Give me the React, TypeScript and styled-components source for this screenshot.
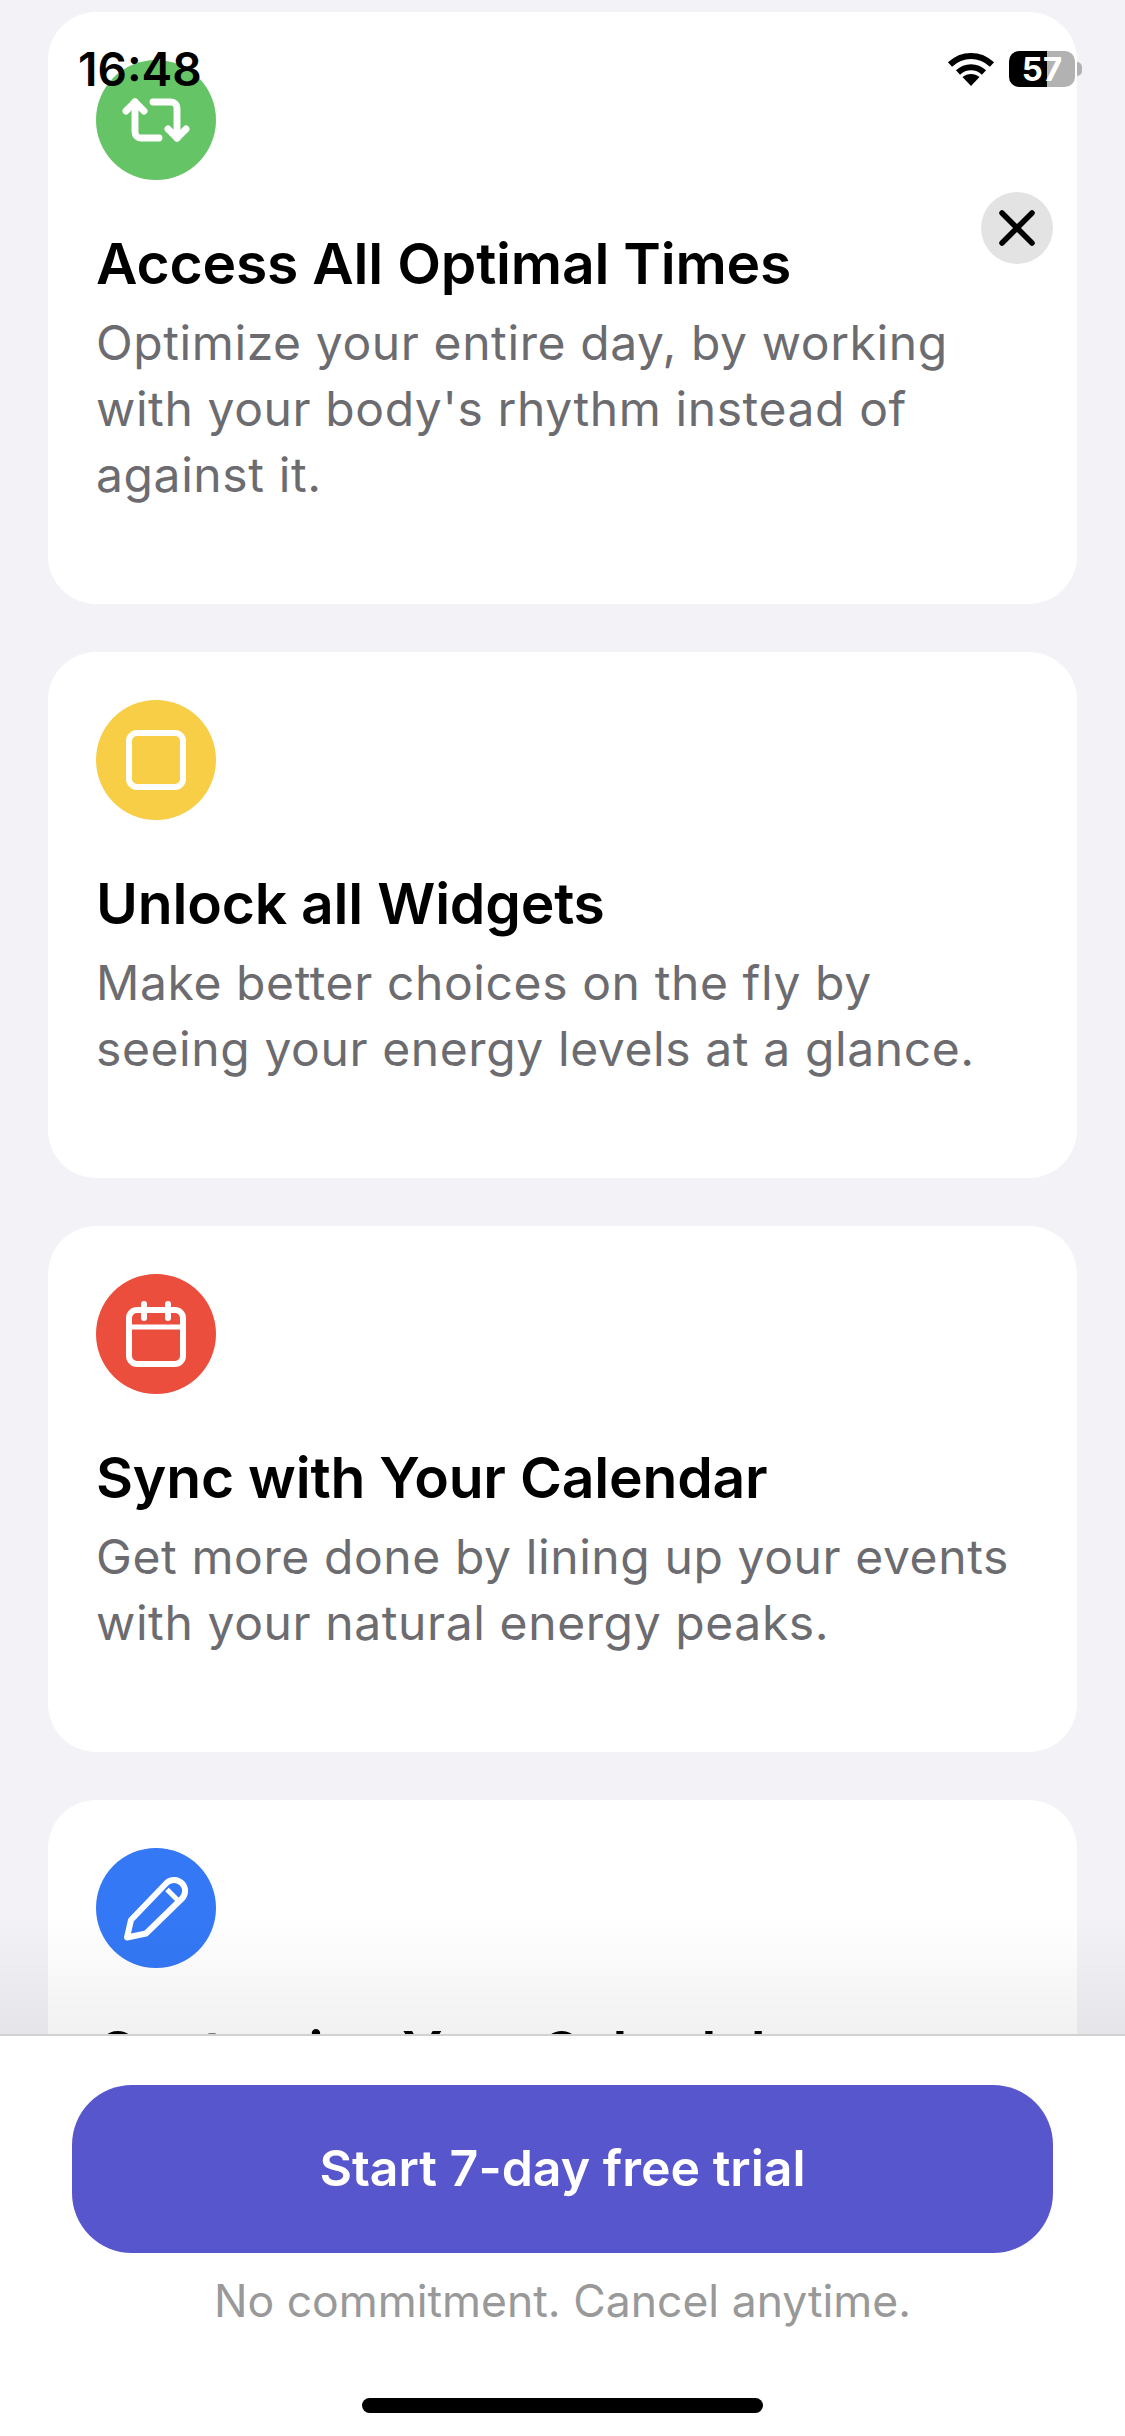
import styled, { createGlobalStyle } from "styled-components";
import { Repeat2 } from "lucide-react";

const GlobalStyle = createGlobalStyle`
  html, body {
    margin: 0;
    padding: 0;
    background: #f2f2f7;
  }
`;

const Screen = styled.div`
  position: relative;
  display: flex;
  flex-direction: column;
  width: 1125px;
  height: 2436px;
  overflow: hidden;
  background: #f2f2f7;
  font-family: Inter, "Liberation Sans", sans-serif;
`;

const StatusBar = styled.div`
  position: absolute;
  top: 0;
  left: 0;
  right: 0;
  z-index: 3;
  display: flex;
  justify-content: space-between;
  align-items: center;
  height: 138px;
  padding: 0 50px 0 78px;
  box-sizing: border-box;
`;

const Clock = styled.span`
  font-size: 46px;
  font-weight: 600;
  line-height: 1;
  color: #000;
`;

const StatusIcons = styled.div`
  display: flex;
  align-items: center;
  gap: 14px;
`;

const Battery = styled.div`
  position: relative;
  width: 66px;
  height: 36px;
  border-radius: 10px;
  background: linear-gradient(to right, #000 0 57%, #b2b2b2 57% 100%);
  display: flex;
  align-items: center;
  justify-content: center;
  font-size: 33px;
  font-weight: 700;
  color: #fff;

  &::after {
    content: "";
    position: absolute;
    right: -7px;
    top: 11px;
    width: 5px;
    height: 14px;
    border-radius: 0 5px 5px 0;
    background: #b2b2b2;
  }
`;

const CloseButton = styled.button`
  position: absolute;
  top: 192px;
  left: 981px;
  z-index: 2;
  display: flex;
  align-items: center;
  justify-content: center;
  width: 72px;
  height: 72px;
  padding: 0;
  border: 0;
  border-radius: 50%;
  background: #e3e3e3;
`;

const FeatureList = styled.div`
  position: relative;
  flex: 1;
  min-height: 0;
  overflow: hidden;
  display: flex;
  flex-direction: column;
  gap: 48px;
  padding: 12px 48px 0;

  &::after {
    content: "";
    position: absolute;
    left: 0;
    right: 0;
    bottom: 0;
    height: 120px;
    background: linear-gradient(to bottom, rgba(0, 0, 0, 0), rgba(0, 0, 0, 0.055));
  }
`;

const Card = styled.section`
  flex-shrink: 0;
  padding: 48px 48px 96px;
  border-radius: 48px;
  background: #fff;
`;

const IconCircle = styled.div<{ $color: string }>`
  display: flex;
  align-items: center;
  justify-content: center;
  width: 120px;
  height: 120px;
  border-radius: 50%;
  background: ${(p) => p.$color};
`;

const Title = styled.h2`
  margin: 48px 0 0;
  font-size: 57px;
  font-weight: 600;
  line-height: 72px;
  color: #000;
  letter-spacing: -0.2px;
`;

const Description = styled.p`
  margin: 10px 0 0;
  font-size: 48px;
  font-weight: 400;
  line-height: 66px;
  color: #6c6c70;
  letter-spacing: 0.6px;
`;

const Footer = styled.footer`
  position: relative;
  display: flex;
  flex-direction: column;
  align-items: center;
  height: 402px;
  padding: 49px 72px 0;
  box-sizing: border-box;
  border-top: 2px solid #d2d2d2;
  background: #fff;
`;

const TrialButton = styled.button`
  width: 100%;
  height: 168px;
  border: 0;
  border-radius: 60px;
  padding: 0 0 3px;
  background: #5856cd;
  color: #fff;
  font-family: inherit;
  font-size: 50px;
  font-weight: 600;
`;

const Note = styled.p`
  margin: 22px 0 0;
  font-size: 44.500px;
  line-height: 52px;
  color: #999;
`;

const HomeIndicator = styled.div`
  position: absolute;
  left: 362px;
  bottom: 23px;
  width: 401px;
  height: 15px;
  border-radius: 8px;
  background: #000;
`;

const WifiIcon = () => (
  <svg width="48" height="34" viewBox="0 0 48 34" fill="none">
    <path d="M3 12.500C15 1 33 1 45 12.500" stroke="#000" strokeWidth="6" />
    <path d="M11 20.500C18.500 13.500 29.500 13.500 37 20.500" stroke="#000" strokeWidth="6" />
    <path d="M15.500 25C20.500 21 27.500 21 32.500 25L24 34Z" fill="#000" />
  </svg>
);

const CloseIcon = () => (
  <svg width="36" height="36" viewBox="0 0 36 36" fill="none">
    <path d="M3 3L33 33M33 3L3 33" stroke="#000" strokeWidth="5.500" strokeLinecap="round" />
  </svg>
);

const SquareIcon = () => (
  <svg width="60" height="60" viewBox="0 0 60 60" fill="none">
    <rect x="3" y="3" width="54" height="54" rx="8" stroke="#fff" strokeWidth="6" />
  </svg>
);

const CalendarIcon = () => (
  <svg width="60" height="66" viewBox="0 0 60 66" fill="none">
    <rect x="3" y="9" width="54" height="54" rx="8" stroke="#fff" strokeWidth="6" />
    <path d="M3 26H57" stroke="#fff" strokeWidth="5" />
    <path d="M18 3V17M42 3V17" stroke="#fff" strokeWidth="6" strokeLinecap="round" />
  </svg>
);

const PencilIcon = () => (
  <svg width="72" height="72" viewBox="0 0 72 72" fill="none">
    <path
      d="M7 65.500L11 48L47 10.500A11 11 0 0 1 62.500 26L26 61.500Z"
      stroke="#fff"
      strokeWidth="6"
      strokeLinejoin="round"
    />
    <path d="M47 17.500L57 27.500" stroke="#fff" strokeWidth="5" />
  </svg>
);

const features = [
  {
    title: "Access All Optimal Times",
    text: "Optimize your entire day, by working with your body's rhythm instead of against it.",
    color: "#65c466",
    icon: <Repeat2 size={72} color="#fff" strokeWidth={2.3} />,
  },
  {
    title: "Unlock all Widgets",
    text: "Make better choices on the fly by seeing your energy levels at a glance.",
    color: "#f7ce46",
    icon: <SquareIcon />,
  },
  {
    title: "Sync with Your Calendar",
    text: "Get more done by lining up your events with your natural energy peaks.",
    color: "#eb4e3d",
    icon: <CalendarIcon />,
  },
  {
    title: "Customize Your Schedule",
    text: "",
    color: "#3478f6",
    icon: <PencilIcon />,
  },
];

export default function App() {
  return (
    <Screen>
      <GlobalStyle />
      <StatusBar>
        <Clock>16:48</Clock>
        <StatusIcons>
          <WifiIcon />
          <Battery>57</Battery>
        </StatusIcons>
      </StatusBar>
      <CloseButton aria-label="Close">
        <CloseIcon />
      </CloseButton>
      <FeatureList>
        {features.map((f) => (
          <Card key={f.title}>
            <IconCircle $color={f.color}>{f.icon}</IconCircle>
            <Title>{f.title}</Title>
            {f.text && <Description>{f.text}</Description>}
          </Card>
        ))}
      </FeatureList>
      <Footer>
        <TrialButton>Start 7-day free trial</TrialButton>
        <Note>No commitment. Cancel anytime.</Note>
        <HomeIndicator />
      </Footer>
    </Screen>
  );
}
